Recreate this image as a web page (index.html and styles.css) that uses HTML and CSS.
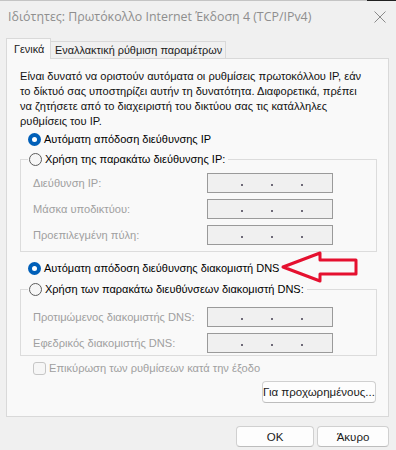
FILE: index.html
```html
<!DOCTYPE html>
<html lang="el">

<head>
  <meta charset="UTF-8" />
  <meta name="viewport" content="width=device-width, initial-scale=1" />
  <title>Ιδιότητες TCP/IPv4</title>
  <link rel="stylesheet" href="styles.css">
</head>

<body>
  <div class="window">
    <div class="top-edge"></div>

    <header class="titlebar">
      <span class="title">Ιδιότητες: Πρωτόκολλο Internet Έκδοση 4 (TCP/IPv4)</span>
      <svg class="close" width="12" height="12" viewBox="0 0 12 12">
        <path d="M0.5 0.5L11.5 11.5M11.5 0.5L0.5 11.5" />
      </svg>
    </header>

    <nav class="tabs">
      <span class="tab active">Γενικά</span>
      <span class="tab">Εναλλακτική ρύθμιση παραμέτρων</span>
    </nav>

    <section class="panel">
      <p class="intro">Είναι δυνατό να οριστούν αυτόματα οι ρυθμίσεις πρωτοκόλλου IP, εάν<br>
        το δίκτυό σας υποστηρίζει αυτήν τη δυνατότητα. Διαφορετικά, πρέπει<br>
        να ζητήσετε από το διαχειριστή του δικτύου σας τις κατάλληλες<br>
        ρυθμίσεις του IP.</p>

      <!-- IP -->
      <div class="radio checked ip-auto"><span class="circle"></span>Αυτόματη απόδοση διεύθυνσης IP</div>
      <fieldset class="group ip-group">
        <legend><span class="radio"><span class="circle"></span>Χρήση της παρακάτω διεύθυνσης IP:</span></legend>
        <div class="row"><span class="label">Διεύθυνση IP:</span><span class="ip"><i></i><i></i><i></i></span></div>
        <div class="row"><span class="label">Μάσκα υποδικτύου:</span><span class="ip"><i></i><i></i><i></i></span></div>
        <div class="row"><span class="label">Προεπιλεγμένη πύλη:</span><span class="ip"><i></i><i></i><i></i></span></div>
      </fieldset>

      <!-- DNS -->
      <div class="radio checked dns-auto"><span class="circle"></span>Αυτόματη απόδοση διεύθυνσης διακομιστή DNS</div>
      <fieldset class="group dns-group">
        <legend><span class="radio"><span class="circle"></span>Χρήση των παρακάτω διευθύνσεων διακομιστή DNS:</span></legend>
        <div class="row"><span class="label">Προτιμώμενος διακομιστής DNS:</span><span class="ip"><i></i><i></i><i></i></span></div>
        <div class="row"><span class="label">Εφεδρικός διακομιστής DNS:</span><span class="ip"><i></i><i></i><i></i></span></div>
      </fieldset>

      <div class="check"><span class="box"></span>Επικύρωση των ρυθμίσεων κατά την έξοδο</div>

      <div class="advanced">
        <button class="btn">Για προχωρημένους...</button>
      </div>
    </section>

    <footer class="buttons">
      <button class="btn ok">OK</button>
      <button class="btn cancel">Άκυρο</button>
    </footer>

    <svg class="arrow" width="80" height="36" viewBox="0 0 80 36">
      <polygon points="3,17 40,3 40,10 76,10 76,24 40,24 40,31" />
    </svg>
  </div>
</body>

</html>
```

FILE: styles.css
```css
* {
  box-sizing: border-box;
}

body {
  margin: 0;
  background: #f0f0f0;
  font-family: 'Liberation Sans', Arial, sans-serif;
  font-size: 11.1px;
  color: #000;
}

.window {
  position: relative;
  width: 396px;
  height: 450px;
  overflow: hidden;
}

.top-edge {
  height: 1px;
  background: linear-gradient(to right, #c4c4c4 0 367px, #202020 367px);
}

.titlebar {
  height: 31px;
  display: flex;
  align-items: center;
  justify-content: space-between;
  padding: 0 10px 0 8px;
}

.title {
  font-family: 'Open Sans', 'Noto Sans', sans-serif;
  font-size: 12.4px;
  color: #8e8e8e;
}

.close {
  fill: none;
  stroke: #8a8a8a;
  stroke-width: 1;
}

.tabs {
  height: 26px;
  display: flex;
  align-items: flex-end;
  padding-left: 6px;
  font-family: 'Liberation Sans', Arial, sans-serif;
  font-size: 10.9px;
  color: #1a1a1a;
}

.tab {
  height: 17px;
  display: flex;
  align-items: center;
  padding: 0 3px 0 4px;
  border: 1px solid #d9d9d9;
  border-bottom: none;
  border-left: none;
  white-space: nowrap;
}

.tab.active {
  position: relative;
  z-index: 1;
  width: 45px;
  height: 21px;
  margin-bottom: -1px;
  padding: 0 0 0 7px;
  border-left: 1px solid #d9d9d9;
  background: #f9f9f9;
}

.panel {
  margin-left: 6px;
  width: 383px;
  height: 359px;
  border: 1px solid #d9d9d9;
  background: #f9f9f9;
}

.intro {
  margin: 0;
  padding: 10px 0 0 13px;
  line-height: 15px;
  white-space: nowrap;
  color: #111;
}

/* radio buttons */
.radio {
  height: 20px;
  display: flex;
  align-items: center;
  gap: 3px;
  white-space: nowrap;
  font-size: 11px;
}

.circle {
  width: 13px;
  height: 13px;
  border-radius: 50%;
  border: 1px solid #5c5c5c;
  background: #f6f6f6;
  flex: none;
}

.radio.checked .circle {
  border: none;
  background: #005fb8;
  display: flex;
  align-items: center;
  justify-content: center;
}

.radio.checked .circle::after {
  content: "";
  width: 5px;
  height: 5px;
  border-radius: 50%;
  background: #fff;
}

.ip-auto,
.dns-auto {
  margin-left: 21px;
}

.dns-auto {
  margin-top: 6px;
}

/* group boxes */
.group {
  margin: 0 0 0 13px;
  width: 357px;
  padding: 0 0 6px 12px;
  border: 1px solid #dcdcdc;
  min-width: 0;
}

.group legend {
  margin-left: -5px;
  padding: 0 3px 0 1px;
}

.dns-group {
  margin-top: 1px;
  padding-bottom: 2px;
}

.row {
  height: 20px;
  display: flex;
  align-items: center;
  margin-top: 6px;
}

.ip-group .row:first-of-type {
  margin-top: 4px;
}

.dns-group .row:first-of-type {
  margin-top: 8px;
}

.label {
  width: 174px;
  color: #a0a0a0;
  white-space: nowrap;
}

.ip {
  width: 126px;
  height: 20px;
  display: flex;
  align-items: flex-end;
  gap: 28px;
  padding: 0 0 6px 33px;
  border: 1px solid #9a9a9a;
  background: #f0f0f0;
}

.ip i {
  width: 2px;
  height: 2px;
  background: #6e6a78;
}

/* checkbox */
.check {
  height: 20px;
  margin: 2px 0 0 26px;
  display: flex;
  align-items: center;
  gap: 3px;
  color: #a0a0a0;
}

.box {
  width: 13px;
  height: 13px;
  border: 1px solid #c6c6c6;
  border-radius: 3px;
  background: #f6f6f6;
}

/* buttons */
.btn {
  height: 21px;
  padding: 0;
  font-family: 'Liberation Sans', Arial, sans-serif;
  font-size: 11.5px;
  color: #1a1a1a;
  white-space: nowrap;
  background: #fdfdfd;
  border: 1px solid #d0d0d0;
  border-bottom-color: #bdbdbd;
  border-radius: 4px;
}

.advanced {
  display: flex;
  justify-content: flex-end;
  margin: 3px 12px 0 0;
}

.advanced .btn {
  width: 114px;
  height: 22px;
}

.buttons {
  display: flex;
  justify-content: flex-end;
  gap: 3px;
  margin: 9px 7px 0 0;
}

.ok {
  width: 78px;
}

.cancel {
  width: 72px;
}

.arrow {
  position: absolute;
  left: 280px;
  top: 250px;
}

.arrow polygon {
  fill: none;
  stroke: #e5102f;
  stroke-width: 3;
  stroke-linejoin: round;
}
```
